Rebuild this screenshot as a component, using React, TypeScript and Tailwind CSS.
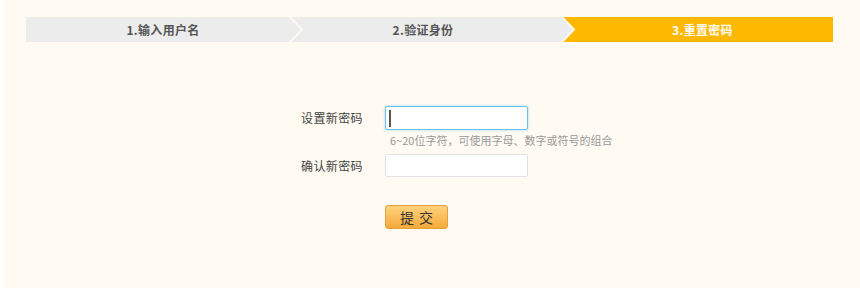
import React from "react";

const cjk = { fontFamily: '"Noto Sans CJK SC", "Noto Sans", sans-serif' };

function Chevron({ left, right }: { left: string; right: string }) {
  return (
    <svg width="16" height="25" viewBox="0 0 16 25" className="absolute right-[-14px] top-0 z-10">
      <rect x="0" y="0" width="16" height="25" fill={right} />
      <polygon points="0,0 1,0 13.5,12.5 1,25 0,25" fill={left} />
      <polyline points="1,-1 14,12.5 1,26" fill="none" stroke="#fdfaf3" strokeWidth="2" />
    </svg>
  );
}

function Steps() {
  return (
    <div className="flex h-[25px] text-[12px] font-bold" style={cjk}>
      <div className="relative flex w-[264px] items-center justify-center bg-[#ececec] pl-[10px] tracking-[0.3px] text-[#555]">
        1.输入用户名
        <Chevron left="#ececec" right="#ececec" />
      </div>
      <div className="relative flex w-[272px] items-center justify-center bg-[#ececec] pr-[6px] tracking-[0.3px] text-[#555]">
        2.验证身份
        <Chevron left="#ececec" right="#ffb800" />
      </div>
      <div className="flex w-[271px] items-center justify-center bg-[#ffb800] pl-[10px] tracking-[0.3px] text-white">
        3.重置密码
      </div>
    </div>
  );
}

export default function App() {
  return (
    <div className="h-[290px] w-[860px] bg-white">
      <div className="ml-[4px] h-[288px] bg-[#fffaf2] px-[22px] pt-[17px]" style={cjk}>
        <Steps />
        <div className="mt-[64px] grid grid-cols-[337px_auto] items-start gap-x-[22px] text-[12px] text-[#444]">
          <div className="flex h-[24px] items-center justify-end tracking-[0.4px]">设置新密码</div>
          <div>
            <div className="relative h-[24px] w-[143px] rounded-[2px] border border-[#6fc0e6] bg-white shadow-[0_0_3px_#9fd6f0]">
              <span className="absolute left-[3px] top-[3px] h-[17px] w-[2px] bg-[#555]" />
            </div>
            <div className="mt-[2px] whitespace-nowrap pl-[5px] text-[11px] leading-[16px] text-[#999]">
              6~20位字符，可使用字母、数字或符号的组合
            </div>
          </div>
          <div className="mt-[6px] flex h-[23px] items-center justify-end tracking-[0.4px]">确认新密码</div>
          <div className="mt-[6px] h-[23px] w-[143px] rounded-[2px] border border-[#e2e2e2] bg-white" />
          <div />
          <button className="mt-[28px] h-[24px] w-[63px] rounded-[3px] border border-[#e4a038] bg-gradient-to-b from-[#fdd27a] to-[#f6a938] pl-[5px] text-[14px] tracking-[5px] text-[#333]">
            提交
          </button>
        </div>
      </div>
    </div>
  );
}
